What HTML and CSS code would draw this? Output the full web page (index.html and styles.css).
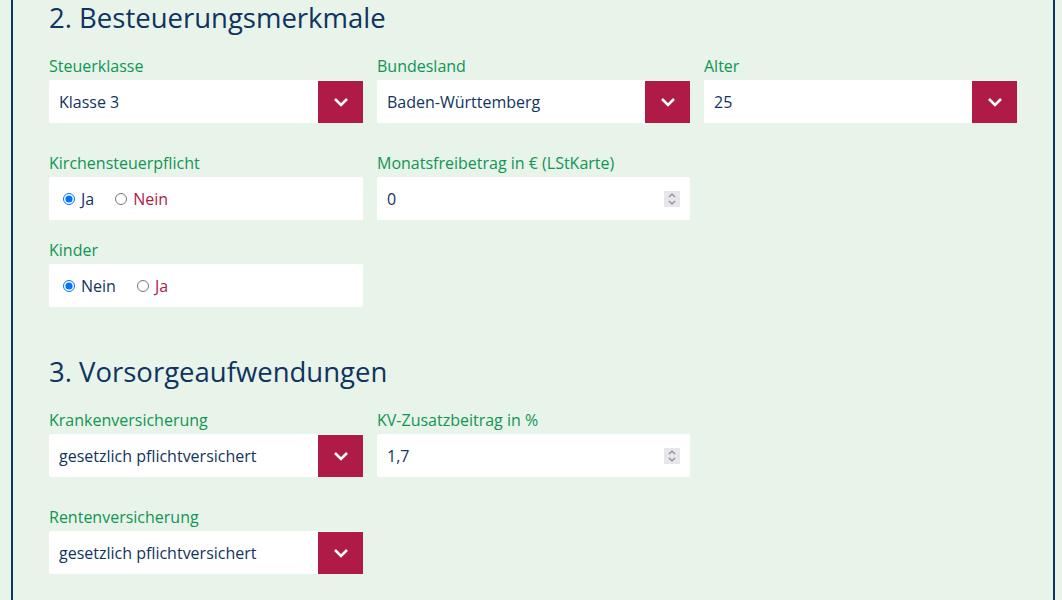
FILE: index.html
```html
<!DOCTYPE html>
<html lang="de">
<head>
  <meta charset="UTF-8" />
  <meta name="viewport" content="width=device-width, initial-scale=1.0"/>
  <title>Brutto-Netto-Rechner</title>
  <link rel="stylesheet" href="styles.css">
</head>
<body>
  <div class="panel">

    <section class="section">
      <h2>2. Besteuerungsmerkmale</h2>
      <div class="grid">
        <div class="field field-select">
          <label>Steuerklasse</label>
          <div class="box select">
            <span class="value">Klasse 3</span>
            <span class="arrow"><svg width="16" height="10" viewBox="0 0 16 10"><path d="M2 2l6 6 6-6" fill="none" stroke="#fff" stroke-width="2.6"/></svg></span>
          </div>
        </div>
        <div class="field field-select">
          <label>Bundesland</label>
          <div class="box select">
            <span class="value">Baden-Württemberg</span>
            <span class="arrow"><svg width="16" height="10" viewBox="0 0 16 10"><path d="M2 2l6 6 6-6" fill="none" stroke="#fff" stroke-width="2.6"/></svg></span>
          </div>
        </div>
        <div class="field field-select">
          <label>Alter</label>
          <div class="box select">
            <span class="value">25</span>
            <span class="arrow"><svg width="16" height="10" viewBox="0 0 16 10"><path d="M2 2l6 6 6-6" fill="none" stroke="#fff" stroke-width="2.6"/></svg></span>
          </div>
        </div>

        <div class="field">
          <label>Kirchensteuerpflicht</label>
          <div class="box radios">
            <label class="radio on"><input type="radio" name="kirche" checked> Ja</label>
            <label class="radio"><input type="radio" name="kirche"> Nein</label>
          </div>
        </div>
        <div class="field">
          <label>Monatsfreibetrag in € (LStKarte)</label>
          <div class="box number">
            <span class="value">0</span>
            <span class="spin"><svg width="16" height="16" viewBox="0 0 16 16"><path d="M5 6l3-3 3 3M5 10l3 3 3-3" fill="none" stroke="#8a8a96" stroke-width="1.2"/></svg></span>
          </div>
        </div>
        <div class="field"></div>

        <div class="field">
          <label>Kinder</label>
          <div class="box radios">
            <label class="radio on"><input type="radio" name="kinder" checked> Nein</label>
            <label class="radio"><input type="radio" name="kinder"> Ja</label>
          </div>
        </div>
      </div>
    </section>

    <section class="section">
      <h2>3. Vorsorgeaufwendungen</h2>
      <div class="grid">
        <div class="field field-select">
          <label>Krankenversicherung</label>
          <div class="box select">
            <span class="value">gesetzlich pflichtversichert</span>
            <span class="arrow"><svg width="16" height="10" viewBox="0 0 16 10"><path d="M2 2l6 6 6-6" fill="none" stroke="#fff" stroke-width="2.6"/></svg></span>
          </div>
        </div>
        <div class="field field-select">
          <label>KV-Zusatzbeitrag in %</label>
          <div class="box number">
            <span class="value">1,7</span>
            <span class="spin"><svg width="16" height="16" viewBox="0 0 16 16"><path d="M5 6l3-3 3 3M5 10l3 3 3-3" fill="none" stroke="#8a8a96" stroke-width="1.2"/></svg></span>
          </div>
        </div>
        <div class="field"></div>

        <div class="field field-select">
          <label>Rentenversicherung</label>
          <div class="box select">
            <span class="value">gesetzlich pflichtversichert</span>
            <span class="arrow"><svg width="16" height="10" viewBox="0 0 16 10"><path d="M2 2l6 6 6-6" fill="none" stroke="#fff" stroke-width="2.6"/></svg></span>
          </div>
        </div>
      </div>
    </section>

  </div>
</body>
</html>
```

FILE: styles.css
```css
body {
  margin: 0;
  background-color: #e8f3ea;
  font-family: "Open Sans", "Noto Sans", sans-serif;
  color: #12345e;
}

.panel {
  margin: 0 7px 0 11px;
  padding: 1px 36px 0;
  border-left: 2px solid #0c3461;
  border-right: 2px solid #0c3461;
  min-height: 599px;
}

.section {
  padding-bottom: 10px;
}

.section + .section {
  padding-top: 19px;
}

h2 {
  margin: 0 0 20px;
  font-size: 27.5px;
  line-height: 34px;
  font-weight: 400;
  color: #0f3460;
}

.grid {
  display: grid;
  grid-template-columns: 314px 313px 313px;
  column-gap: 14px;
}

.field {
  padding-bottom: 19px;
}

.field-select {
  padding-bottom: 29px;
}

.field > label {
  display: block;
  font-size: 16px;
  line-height: 22px;
  margin-bottom: 3px;
  color: #0e9654;
}

.box {
  height: 43px;
  background-color: #fff;
  border-radius: 2px;
  display: flex;
  align-items: center;
  font-size: 16px;
}

.value {
  flex: 1;
  padding-left: 10px;
}

.arrow {
  width: 45px;
  height: 42px;
  margin-top: 1px;
  background-color: #b01a46;
  display: flex;
  align-items: center;
  justify-content: center;
}

.number {
  padding-right: 10px;
}

.spin {
  width: 16px;
  height: 16px;
  background-color: #e6e6ec;
  display: flex;
}

.radios {
  padding-left: 14px;
  gap: 21px;
}

.radio {
  display: flex;
  align-items: center;
  gap: 6px;
  color: #b01a46;
}

.radio.on {
  color: #12345e;
}

.radio input {
  margin: 0;
  width: 12px;
  height: 12px;
}
```
